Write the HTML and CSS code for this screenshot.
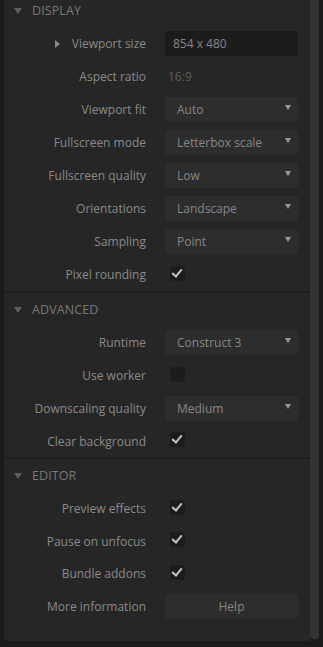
FILE: index.html
```html
<!DOCTYPE html>
<html lang="en">
<head>
    <meta charset="UTF-8">
    <meta name="viewport" content="width=device-width, initial-scale=1.0">
    <title>Project Properties</title>
    <link rel="stylesheet" href="styles.css">
</head>
<body>

<div class="window">
    <div class="panel">
        <div class="section first">
            <div class="section-header"><span class="caret-down"></span>DISPLAY</div>
            <div class="row">
                <div class="label"><span class="caret-right"></span>Viewport size</div>
                <div class="text-input">854 x 480</div>
            </div>
            <div class="row">
                <div class="label">Aspect ratio</div>
                <div class="value-muted">16:9</div>
            </div>
            <div class="row">
                <div class="label">Viewport fit</div>
                <div class="select">Auto<span class="arrow"></span></div>
            </div>
            <div class="row">
                <div class="label">Fullscreen mode</div>
                <div class="select">Letterbox scale<span class="arrow"></span></div>
            </div>
            <div class="row">
                <div class="label">Fullscreen quality</div>
                <div class="select">Low<span class="arrow"></span></div>
            </div>
            <div class="row">
                <div class="label">Orientations</div>
                <div class="select">Landscape<span class="arrow"></span></div>
            </div>
            <div class="row">
                <div class="label">Sampling</div>
                <div class="select">Point<span class="arrow"></span></div>
            </div>
            <div class="row">
                <div class="label">Pixel rounding</div>
                <div class="checkbox checked"></div>
            </div>
        </div>

        <div class="section">
            <div class="section-header"><span class="caret-down"></span>ADVANCED</div>
            <div class="row">
                <div class="label">Runtime</div>
                <div class="select">Construct 3<span class="arrow"></span></div>
            </div>
            <div class="row">
                <div class="label">Use worker</div>
                <div class="checkbox"></div>
            </div>
            <div class="row">
                <div class="label">Downscaling quality</div>
                <div class="select">Medium<span class="arrow"></span></div>
            </div>
            <div class="row short">
                <div class="label">Clear background</div>
                <div class="checkbox checked"></div>
            </div>
        </div>

        <div class="section last">
            <div class="section-header"><span class="caret-down"></span>EDITOR</div>
            <div class="row">
                <div class="label">Preview effects</div>
                <div class="checkbox checked"></div>
            </div>
            <div class="row short">
                <div class="label">Pause on unfocus</div>
                <div class="checkbox checked"></div>
            </div>
            <div class="row">
                <div class="label">Bundle addons</div>
                <div class="checkbox checked"></div>
            </div>
            <div class="row">
                <div class="label">More information</div>
                <div class="button">Help</div>
            </div>
        </div>
    </div>
    <div class="scrollbar"><div class="thumb"></div></div>
</div>

</body>
</html>
```

FILE: styles.css
```css
body {
    margin: 0;
    padding: 0;
    background-color: #1b1b1b;
    font-family: "Open Sans", "Noto Sans", sans-serif;
    font-size: 12px;
    color: #8a8a8a;
    overflow: hidden;
}
.window {
    display: flex;
    height: 647px;
    padding-left: 4px;
}
.panel {
    width: 306px;
    height: 641px;
    background-color: #262626;
    border-radius: 0 0 0 4px;
    overflow: hidden;
}
.scrollbar {
    width: 9px;
    height: 639px;
}
.thumb {
    height: 100%;
    background-color: #333333;
    border-radius: 0 0 4px 4px;
}
.section {
    border-bottom: 2px solid #1d1d1d;
}
.section.first {
    margin-top: -6px;
}
.section.last {
    border-bottom: none;
}
.section-header {
    height: 33px;
    display: flex;
    align-items: center;
    color: #787878;
    font-size: 12.5px;
    letter-spacing: 0.1px;
}
.caret-down {
    width: 0;
    height: 0;
    margin: 0 10px 0 10px;
    border-left: 4px solid transparent;
    border-right: 4px solid transparent;
    border-top: 6px solid #5e5e5e;
}
.row {
    height: 33px;
    display: grid;
    grid-template-columns: 142px 133px;
    column-gap: 19px;
    align-items: center;
}
.row.short {
    height: 32px;
}
.label {
    display: flex;
    justify-content: flex-end;
    align-items: center;
}
.caret-right {
    width: 0;
    height: 0;
    margin-right: 12px;
    border-top: 4px solid transparent;
    border-bottom: 4px solid transparent;
    border-left: 5px solid #8a8a8a;
}
.text-input,
.select,
.button {
    height: 25px;
    border-radius: 3px;
    display: flex;
    align-items: center;
    box-sizing: border-box;
}
.text-input {
    padding-left: 8px;
    background-color: #1c1c1c;
    color: #878787;
}
.select {
    padding-left: 12px;
    background-color: #2d2d2d;
    color: #878787;
    position: relative;
}
.arrow {
    position: absolute;
    right: 7px;
    top: 8px;
    width: 0;
    height: 0;
    border-left: 3px solid transparent;
    border-right: 3px solid transparent;
    border-top: 5px solid #9a9a9a;
}
.button {
    background-color: #2d2d2d;
    justify-content: center;
    color: #878787;
}
.value-muted {
    padding-left: 3px;
    color: #5f5f5f;
}
.checkbox {
    width: 15px;
    height: 15px;
    margin-left: 5px;
    border-radius: 3px;
    background-color: #1c1c1c;
    margin-top: -3px;
    position: relative;
}
.checkbox.checked::after {
    content: "";
    position: absolute;
    left: 4px;
    top: 1px;
    width: 4px;
    height: 8px;
    border-right: 2px solid #c4c4c4;
    border-bottom: 2px solid #c4c4c4;
    transform: rotate(40deg);
}
```
